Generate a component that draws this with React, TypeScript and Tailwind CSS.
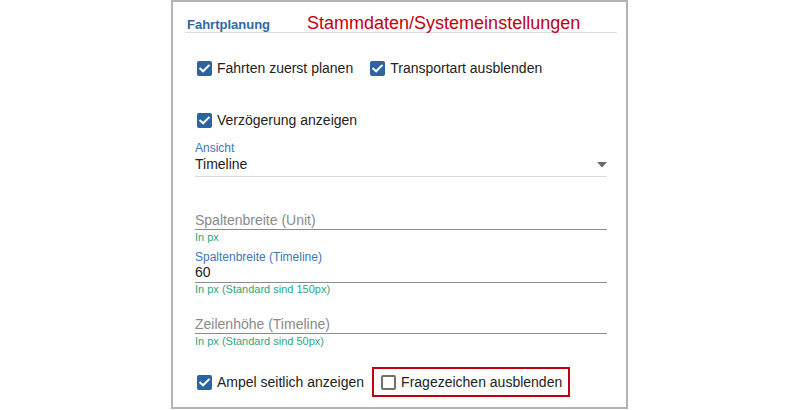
import React from "react";

const font = { fontFamily: '"Liberation Sans", Arial, Helvetica, sans-serif' };

function Check({ checked }: { checked: boolean }) {
  if (checked) {
    return (
      <span className="flex h-[15px] w-[15px] shrink-0 items-center justify-center rounded-[2px] bg-[#2b63a3]">
        <svg width="15" height="15" viewBox="0 0 15 15">
          <path d="M3.3 7.6 L6.1 10.3 L11.8 4.6" fill="none" stroke="#ffffff" strokeWidth="2" strokeLinecap="square" />
        </svg>
      </span>
    );
  }
  return <span className="block h-[15px] w-[15px] shrink-0 rounded-[2px] border-2 border-[#707070] bg-white" />;
}

function CheckItem({ label, checked = true }: { label: string; checked?: boolean }) {
  return (
    <span className="flex items-center gap-[5px]">
      <Check checked={checked} />
      <span className="text-[14px] leading-[20px] text-[#222]">{label}</span>
    </span>
  );
}

export default function App() {
  return (
    <div className="h-[410px] w-[800px] bg-white" style={font}>
      <div className="ml-[171px] flex h-[409px] w-[457px] flex-col border-2 border-[#b4b4b4] bg-white">
        <div className="ml-[12px] mr-[9px] flex h-[31px] items-baseline border-b border-[#dcdcdc] pl-[2px] pt-[12px]">
          <span className="text-[13px] font-bold leading-[18px] text-[#2c68a8]">Fahrtplanung</span>
          <span className="ml-[37px] text-[18px] leading-[18px] text-[#c4000f]">Stammdaten/Systemeinstellungen</span>
        </div>

        <div className="flex flex-col pl-[22px] pr-[19px]">
          <div className="ml-[2px] mt-[25px] flex h-[20px] items-center gap-[17px]">
            <CheckItem label="Fahrten zuerst planen" />
            <CheckItem label="Transportart ausblenden" />
          </div>
          <div className="ml-[2px] mt-[32px] flex h-[20px] items-center">
            <CheckItem label="Verzögerung anzeigen" />
          </div>

          <div className="mt-[12px] text-[12px] leading-[13px] text-[#3b77b9]">Ansicht</div>
          <div className="mt-[0px] flex h-[22px] items-start justify-between border-b border-[#dadada] pb-[3px]">
            <span className="text-[14px] leading-[18px] text-[#222]">Timeline</span>
            <svg width="10" height="6" viewBox="0 0 10 6" className="mt-[7px]">
              <path d="M0 0 L10 0 L5 5.5 Z" fill="#6b6b6b" />
            </svg>
          </div>

          <div className="mt-[34px] h-[19px] border-b border-[#8c8c8c] text-[14px] leading-[18px] text-[#8a8a8a]">
            Spaltenbreite (Unit)
          </div>
          <div className="mt-[1px] text-[11px] leading-[13px] text-[#2aa87e]">In px</div>

          <div className="mt-[7px] text-[12px] leading-[13px] text-[#3b77b9]">Spaltenbreite (Timeline)</div>
          <div className="h-[19px] border-b border-[#8c8c8c] text-[14px] leading-[16px] text-[#222]">60</div>
          <div className="text-[11px] leading-[13px] text-[#2aa87e]">In px (Standard sind 150px)</div>

          <div className="mt-[19px] h-[19px] border-b border-[#8c8c8c] text-[14px] leading-[18px] text-[#8a8a8a]">
            Zeilenhöhe (Timeline)
          </div>
          <div className="mt-[1px] text-[11px] leading-[13px] text-[#2aa87e]">In px (Standard sind 50px)</div>

          <div className="ml-[2px] mt-[19px] flex h-[30px] items-center gap-[8px]">
            <CheckItem label="Ampel seitlich anzeigen" />
            <div className="flex h-[30px] items-center border-2 border-[#c4000f] pl-[7px] pr-[6px]">
              <CheckItem label="Fragezeichen ausblenden" checked={false} />
            </div>
          </div>
        </div>
      </div>
    </div>
  );
}
